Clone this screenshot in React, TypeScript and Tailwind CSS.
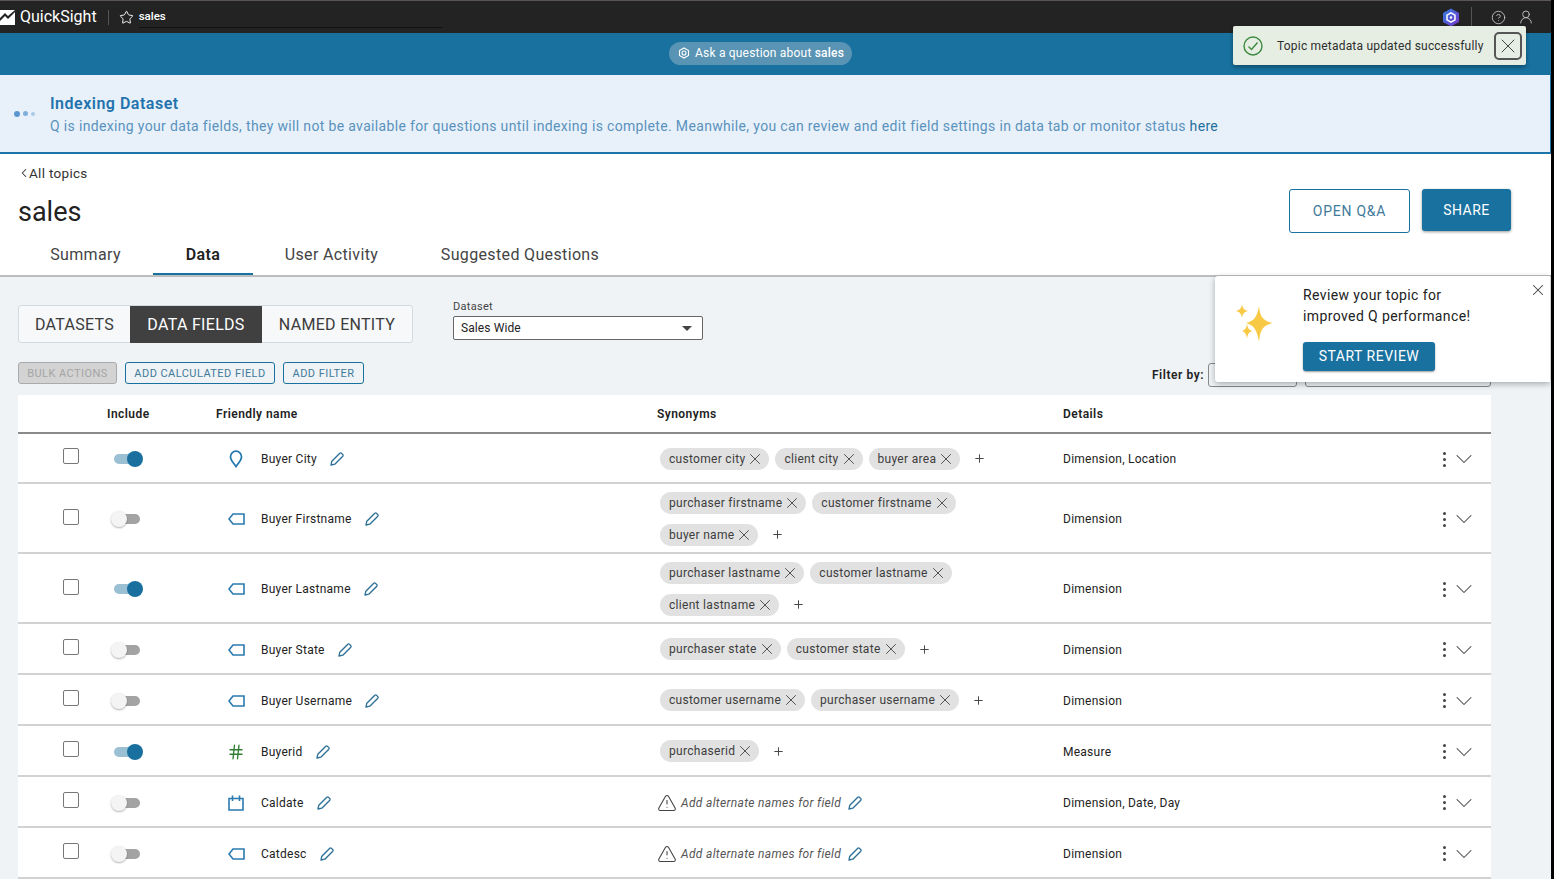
import React from 'react';
import { Star, CircleHelp, UserRound, X, Plus, ChevronDown, ChevronLeft, Hash, TriangleAlert } from 'lucide-react';

type Field = {
  name: string;
  kind: 'location' | 'tag' | 'hash' | 'date';
  on: boolean;
  lines: string[][];
  details: string;
  h: string;
  cb: string;
};

const fields: Field[] = [
  { name: 'Buyer City', kind: 'location', on: true, lines: [['customer city', 'client city', 'buyer area']], details: 'Dimension, Location', h: 'h-[50px]', cb: '-mt-[7px]' },
  { name: 'Buyer Firstname', kind: 'tag', on: false, lines: [['purchaser firstname', 'customer firstname'], ['buyer name']], details: 'Dimension', h: 'h-[70px]', cb: '-mt-[5px]' },
  { name: 'Buyer Lastname', kind: 'tag', on: true, lines: [['purchaser lastname', 'customer lastname'], ['client lastname']], details: 'Dimension', h: 'h-[70px]', cb: '-mt-[5px]' },
  { name: 'Buyer State', kind: 'tag', on: false, lines: [['purchaser state', 'customer state']], details: 'Dimension', h: 'h-[51px]', cb: '-mt-[5px]' },
  { name: 'Buyer Username', kind: 'tag', on: false, lines: [['customer username', 'purchaser username']], details: 'Dimension', h: 'h-[51px]', cb: '-mt-[5px]' },
  { name: 'Buyerid', kind: 'hash', on: true, lines: [['purchaserid']], details: 'Measure', h: 'h-[51px]', cb: '-mt-[5px]' },
  { name: 'Caldate', kind: 'date', on: false, lines: [], details: 'Dimension, Date, Day', h: 'h-[51px]', cb: '-mt-[5px]' },
  { name: 'Catdesc', kind: 'tag', on: false, lines: [], details: 'Dimension', h: 'h-[51px]', cb: '-mt-[5px]' },
];

const FieldIcon = ({ kind }: { kind: Field['kind'] }) => {
  if (kind === 'hash') return <Hash size={18} className="text-[#2e7d32] -ml-[1px]" strokeWidth={1.8} />;
  if (kind === 'location')
    return (
      <svg width="16" height="18" viewBox="0 0 16 18" fill="none" stroke="#1f76ad" strokeWidth="1.7">
        <path d="M8 16.5 C6 13.5 2.5 10.5 2.5 6.7 a5.5 5.5 0 0 1 11 0 C13.5 10.5 10 13.5 8 16.5 Z" />
      </svg>
    );
  if (kind === 'date')
    return (
      <svg width="16" height="16" viewBox="0 0 16 16" fill="none" stroke="#2b7ab0" strokeWidth="1.6">
        <path d="M1 3.5 H15 V15 H1 Z M4.5 0.5 V6 M11.5 0.5 V6" />
      </svg>
    );
  return (
    <svg width="17" height="12" viewBox="0 0 17 12" fill="none" stroke="#2b7ab0" strokeWidth="1.6">
      <path d="M5 1 H16 V11 H5 L1 6 Z" />
    </svg>
  );
};

const EditPencil = () => (
  <svg width="14" height="14" viewBox="0 0 14 14" fill="none" stroke="#2b6f96" strokeWidth="1.3" strokeLinejoin="round">
    <path d="M1 13 L1.8 9.2 L9.8 1.2 Q10.6 .6 11.4 1.2 L12.8 2.6 Q13.4 3.4 12.8 4.2 L4.8 12.2 Z" />
  </svg>
);

const Toggle = ({ on }: { on: boolean }) =>
  on ? (
    <div className="relative h-[10px] w-[26px] ml-[7px] rounded-full bg-[#9bbfd3]">
      <div className="absolute -right-[3px] -top-[3px] h-4 w-4 rounded-full bg-[#19709f]" />
    </div>
  ) : (
    <div className="relative h-[10px] w-[26px] ml-[7px] rounded-full bg-[#a3a3a3]">
      <div className="absolute -left-[3px] -top-[3px] h-4 w-4 rounded-full bg-[#f4f4f4] shadow-[0_1px_2px_rgba(0,0,0,0.3)]" />
    </div>
  );

const Chip = ({ label }: { label: string }) => (
  <span className="flex h-[22px] items-center gap-[1px] rounded-full bg-[#e1e1e1] pl-[9px] pr-[5px] text-[12px] tracking-[0.3px] text-[#3d3d3d]">
    {label}
    <X size={18} strokeWidth={1.2} className="text-[#444]" />
  </span>
);

const Row = ({ f }: { f: Field }) => (
  <div className={`grid grid-cols-[89px_109px_441px_406px_1fr] items-center border-b-2 border-[#d2d2d2] bg-white pt-[2px] ${f.h}`}>
    <div className={`flex justify-center pl-[17px] ${f.cb}`}>
      <div className="h-4 w-4 rounded-[2px] border border-[#777] bg-white" />
    </div>
    <Toggle on={f.on} />
    <div className="flex items-center pl-[12px] text-[12px] tracking-[0.25px] text-[#222]">
      <div className="flex w-[33px] items-center">
        <FieldIcon kind={f.kind} />
      </div>
      <span>{f.name}</span>
      <span className="ml-[13px]">
        <EditPencil />
      </span>
    </div>
    <div className="pl-[3px]">
      {f.lines.length === 0 ? (
        <div className="flex items-center text-[12px] italic tracking-[0.33px] text-[#555] -ml-[3px]">
          <TriangleAlert size={20} strokeWidth={1.3} className="mr-[4px] text-[#444]" />
          Add alternate names for field
          <span className="ml-[7px]">
            <EditPencil />
          </span>
        </div>
      ) : (
        <div className="-mt-[1px] flex flex-col gap-[10px]">
          {f.lines.map((line, i) => (
            <div key={i} className="flex items-center gap-[6px]">
              {line.map((s) => (
                <Chip key={s} label={s} />
              ))}
              {i === f.lines.length - 1 && <Plus size={13} strokeWidth={1.8} className="ml-[7px] text-[#444]" />}
            </div>
          ))}
        </div>
      )}
    </div>
    <div className="flex items-center justify-between pr-[20px] text-[12px] tracking-[0.25px] text-[#222]">
      <span>{f.details}</span>
      <div className="flex items-center gap-[4px]">
        <span className="flex flex-col gap-[3px]">
          <span className="h-[3px] w-[3px] rounded-full bg-[#444]" />
          <span className="h-[3px] w-[3px] rounded-full bg-[#444]" />
          <span className="h-[3px] w-[3px] rounded-full bg-[#444]" />
        </span>
        <ChevronDown size={28} strokeWidth={0.9} className="-mr-[7px] text-[#444]" />
      </div>
    </div>
  </div>
);

export default function App() {
  return (
    <div className="relative flex h-[879px] w-full overflow-hidden bg-black font-['Roboto',sans-serif]">
      <div className="flex w-[1551px] flex-col bg-white">
        {/* top bar */}
        <header className="flex h-[33px] shrink-0 items-center border-t border-[#5c5555] bg-[#232323] pr-[17px] text-white">
          <svg width="15" height="15" viewBox="0 0 15 15" className="shrink-0">
            <rect width="15" height="15" fill="#fff" />
            <path d="M0 11 L5 6 L8 9 L15 2 V0 L8 6 L5 3 L0 8 Z" fill="#232323" />
          </svg>
          <span className="ml-[5px] text-[16px]">QuickSight</span>
          <div className="ml-[11px] mr-[10px] h-[15px] w-px bg-[#555]" />
          <Star size={15} strokeWidth={1.5} />
          <div className="ml-[5px] flex h-[27px] w-[303px] items-center self-start border-b border-[#111] pt-[5px] text-[11.5px] font-medium">sales</div>
          <div className="ml-auto flex items-center">
            <svg width="18" height="19" viewBox="0 0 18 19">
              <defs>
                <linearGradient id="hexg" x1="0" y1="0" x2="1" y2="1">
                  <stop offset="0" stopColor="#2f7fe0" />
                  <stop offset="1" stopColor="#7a35c9" />
                </linearGradient>
              </defs>
              <path d="M9 .5 L17 5 V14 L9 18.5 L1 14 V5 Z" fill="url(#hexg)" />
              <path d="M9 4.8 L13 7.1 V11.9 L9 14.2 L5 11.9 V7.1 Z" fill="none" stroke="#fff" strokeWidth="1.5" />
              <circle cx="9" cy="9.5" r="1.2" fill="#fff" />
            </svg>
            <div className="ml-[11px] mr-[19px] h-[20px] w-px bg-[#555]" />
            <CircleHelp size={15} strokeWidth={1.3} className="text-[#ccc]" />
            <UserRound size={16} strokeWidth={1.3} className="ml-[12px] text-[#ccc]" />
          </div>
        </header>

        {/* ask bar */}
        <div className="flex h-[42px] shrink-0 items-center bg-[#18719f] pl-[669px]">
          <div className="-mt-[2px] flex h-[23px] w-[183px] items-center gap-[5px] rounded-full bg-[#5a94b4] pl-[9px] text-[12px] tracking-[0.2px] text-white">
            <svg width="12" height="12" viewBox="0 0 12 12" fill="none" stroke="#fff" strokeWidth="1.1">
              <path d="M6 1 L10.5 3.5 V8.5 L6 11 L1.5 8.5 V3.5 Z" />
              <circle cx="6" cy="6" r="2" />
            </svg>
            <span>
              Ask a question about <span className="font-medium">sales</span>
            </span>
          </div>
        </div>

        {/* indexing banner */}
        <div className="flex h-[79px] shrink-0 items-center border-b-2 border-r border-[#1d74a8] bg-[#e8f1fa]">
          <div className="ml-[14px] flex w-[36px] items-center gap-[3px]">
            <span className="h-[6px] w-[6px] rounded-full bg-[#5b97cf]" />
            <span className="h-[5px] w-[5px] rounded-full bg-[#7fb0dc]" />
            <span className="h-[4px] w-[4px] rounded-full bg-[#a9cbe8]" />
          </div>
          <div className="pt-[3px]">
            <div className="text-[16px] font-semibold leading-[22px] tracking-[0.5px] text-[#2273ad]">Indexing Dataset</div>
            <div className="text-[14px] leading-[22px] tracking-[0.34px] text-[#5a92bd]">
              Q is indexing your data fields, they will not be available for questions until indexing is complete. Meanwhile, you can review and edit field settings in data tab or monitor status{' '}
              <span className="text-[#1f6f9c]">here</span>
            </div>
          </div>
        </div>

        {/* title block */}
        <div className="flex h-[123px] shrink-0 flex-col border-b-2 border-[#bdbdbd] bg-white">
          <div className="flex flex-1">
            <div className="flex-1 pl-[17px]">
              <div className="mt-[10px] flex items-center text-[13.5px] leading-[18px] tracking-[0.3px] text-[#333]">
                <ChevronLeft size={14} strokeWidth={1.8} className="-mr-[2px]" />
                All topics
              </div>
              <div className="mt-[12px] pl-[1px] text-[27px] leading-[36px] text-[#222]">sales</div>
            </div>
            <div className="flex gap-[12px] pr-[40px] pt-[35px]">
              <div className="flex h-[44px] w-[121px] items-center justify-center rounded-[3px] border border-[#18719f] text-[14px] tracking-[0.75px] text-[#3f7a9b]">OPEN Q&amp;A</div>
              <div className="flex h-[42px] w-[89px] items-center justify-center rounded-[3px] bg-[#18719f] text-[14px] tracking-[0.45px] text-white shadow-[0_1px_3px_rgba(0,0,0,0.4)]">SHARE</div>
            </div>
          </div>
          <div className="flex pl-[18px] pt-[1px] text-[16px] leading-[18px] tracking-[0.35px] text-[#444]">
            <div className="flex h-[29px] w-[135px] justify-center">Summary</div>
            <div className="flex h-[29px] w-[100px] justify-center border-b-2 border-[#18719f] font-semibold text-[#222]">Data</div>
            <div className="flex h-[29px] w-[157px] justify-center">User Activity</div>
            <div className="flex h-[29px] w-[220px] justify-center">Suggested Questions</div>
          </div>
        </div>

        {/* data tab */}
        <div className="flex-1 bg-[#eff3f6] pl-[18px] pr-[60px] pt-[28px]">
          <div className="flex h-[39px] items-start">
            <div className="flex h-[38px] w-[395px] rounded-[3px] border border-[#d5dade] bg-[#f6f8fa] pt-[1px] text-[16px] tracking-[0.3px]">
              <div className="flex w-[111px] items-center justify-center text-[#3c3c3c]">DATASETS</div>
              <div className="-my-px flex w-[132px] items-center justify-center bg-[#404040] text-white">DATA FIELDS</div>
              <div className="flex flex-1 items-center justify-center text-[#3c3c3c]">NAMED ENTITY</div>
            </div>
            <div className="ml-[40px] -mt-[5px]">
              <div className="text-[11px] leading-[14px] tracking-[0.3px] text-[#444]">Dataset</div>
              <div className="mt-[2px] flex h-[24px] w-[250px] items-center justify-between rounded-[2px] border border-[#666] bg-white pl-[7px] pr-[10px] text-[12px] tracking-[0.1px] text-[#222]">
                Sales Wide
                <span className="h-0 w-0 border-x-[5px] border-t-[5px] border-x-transparent border-t-[#444]" />
              </div>
            </div>
          </div>

          <div className="mt-[18px] flex h-[33px] items-start gap-[8px] text-[11px] tracking-[0.45px]">
            <div className="flex h-[22px] w-[99px] items-center justify-center rounded-[3px] border border-[#aaa] bg-[#d3d3d3] pt-[2px] text-[#a5a5a5]">BULK ACTIONS</div>
            <div className="flex h-[22px] w-[150px] items-center justify-center rounded-[3px] border border-[#18719f] pt-[2px] text-[#3f7a9b]">ADD CALCULATED FIELD</div>
            <div className="flex h-[22px] w-[81px] items-center justify-center rounded-[3px] border border-[#18719f] pt-[2px] text-[#3f7a9b]">ADD FILTER</div>
            <div className="ml-auto mt-[1px] flex items-center">
              <span className="mr-[4px] text-[12px] font-semibold tracking-[0.55px] text-[#222]">Filter by:</span>
              <div className="h-[24px] w-[89px] rounded-[3px] border border-[#888]" />
              <div className="ml-[8px] h-[24px] w-[186px] rounded-[3px] border border-[#888]" />
            </div>
          </div>

          <div className="w-[1473px]">
            <div className="grid h-[39px] grid-cols-[89px_109px_441px_406px_1fr] items-center border-b-2 border-[#8a8a8a] bg-white text-[12px] font-semibold tracking-[0.45px] text-[#222]">
              <div />
              <div>Include</div>
              <div>Friendly name</div>
              <div>Synonyms</div>
              <div>Details</div>
            </div>
            {fields.map((f) => (
              <Row key={f.name} f={f} />
            ))}
          </div>
        </div>
      </div>

      {/* success toast */}
      <div className="absolute left-[1233px] top-[26px] flex h-[39px] w-[293px] items-center rounded-[2px] bg-[#e6eee3] pl-[10px] text-[12px] tracking-[0.2px] text-[#2e2e2e] shadow-[0_2px_4px_rgba(0,0,0,0.35)]">
        <svg width="20" height="20" viewBox="0 0 20 20" fill="none" stroke="#3c8a3f" strokeWidth="1.4">
          <circle cx="10" cy="10" r="9" />
          <path d="M5.5 10.5 L8.5 13.5 L14.5 6.5" />
        </svg>
        <span className="ml-[14px]">Topic metadata updated successfully</span>
        <div className="ml-auto mr-[4px] flex h-[28px] w-[28px] items-center justify-center rounded-[5px] border-2 border-[#555]">
          <X size={24} strokeWidth={1} className="text-[#444]" />
        </div>
      </div>

      {/* review popover */}
      <div className="absolute left-[1215px] top-[276px] flex h-[106px] w-[335px] rounded-l-[3px] bg-white pl-[88px] pt-[9px] shadow-[0_2px_6px_rgba(0,0,0,0.3)]">
        <div className="absolute left-[21px] top-[28px]">
          <svg width="38" height="38" viewBox="0 0 38 38" fill="#f7c945">
            <path d="M23 2 C24 13 27 17 37 19 C27 21 24 26 23 38 C21 26 18 21 10 19 C18 17 21 13 23 2 Z" />
            <path d="M6 0 C6.6 4 8 6 12 7 C8 8 6.6 10 6 14 C5.4 10 4 8 0 7 C4 6 5.4 4 6 0 Z" />
            <path d="M11 20 C11.6 24 13 26 16 27 C13 28 11.6 30 11 35 C10.4 30 9 28 6 27 C9 26 10.4 24 11 20 Z" />
          </svg>
        </div>
        <div>
          <div className="text-[14px] leading-[21px] tracking-[0.4px] text-[#222]">
            Review your topic for
            <br />
            improved Q performance!
          </div>
          <div className="mt-[15px] flex h-[29px] w-[132px] items-center justify-center rounded-[3px] bg-[#18719f] text-[14px] tracking-[0.5px] text-white shadow-[0_1px_2px_rgba(0,0,0,0.4)]">START REVIEW</div>
        </div>
        <X size={18} strokeWidth={1.4} className="absolute right-[3px] top-[5px] text-[#444]" />
      </div>
    </div>
  );
}
